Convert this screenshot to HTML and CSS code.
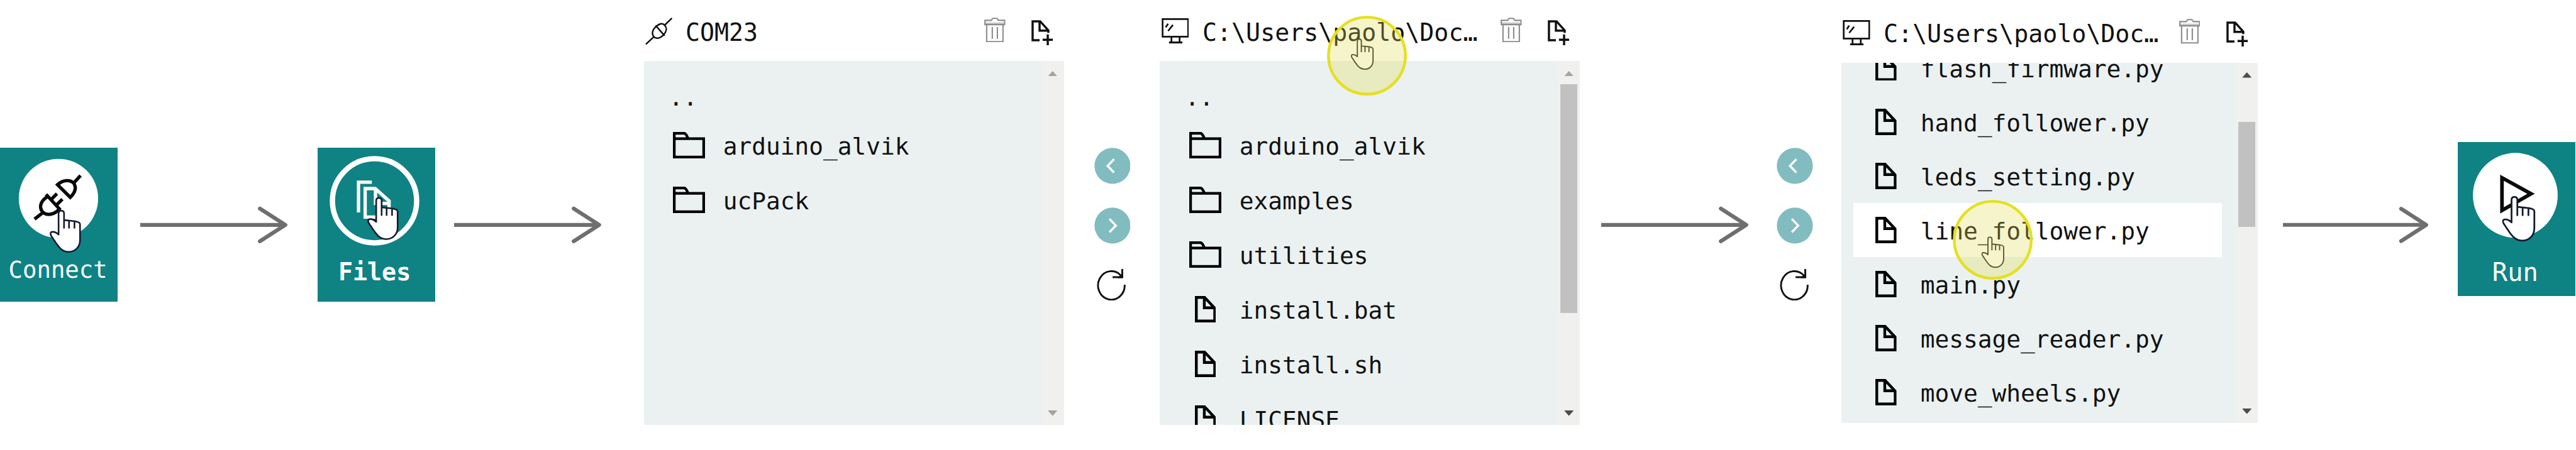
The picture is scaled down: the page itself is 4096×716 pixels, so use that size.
FILE: index.html
```html
<!DOCTYPE html>
<html lang="en">
<head>
<meta charset="utf-8">
<title>Run a script</title>
<link rel="stylesheet" href="styles.css">
</head>
<body>
<svg class="defs" aria-hidden="true">
  <defs>
    <symbol id="hand" viewBox="0 0 52 71" overflow="visible">
      <path stroke-width="2.7" stroke-linejoin="round" d="M15.2 41V6Q15.2 1.6 19.7 1.6Q24.2 1.6 24.2 6V17L42 19Q50.6 20.5 50.6 24V50C50.6 62 42 69.5 32 69.5C21 69.5 16 62 11 55L3 43Q0 37 5 36.5Q10 36 15.2 41ZM24.2 17V31M32.4 18V31M41.4 19V31"/>
    </symbol>
    <symbol id="folder" viewBox="0 0 53 43.5">
      <path fill="none" stroke="#000" stroke-width="4.4" d="M2.2 11V2.2H19Q22 3 25 11M2.2 11H50.8V41.3H2.2Z"/>
    </symbol>
    <symbol id="file" viewBox="0 0 35 43.5">
      <path fill="none" stroke="#000" stroke-width="4.6" d="M2.3 2.3H16L32.7 20V41.2H2.3ZM15.5 2V19.5H33"/>
    </symbol>
    <symbol id="trash" viewBox="0 0 35 41">
      <path fill="#c8c8c8" d="M1 8H34V12H1Z"/>
      <path fill="none" stroke="#8c8c8c" stroke-width="2.2" d="M1.2 4.5H11.5L14 1.3H21L23.5 4.5H33.8V11.5H1.2ZM4 12V39.8H31V12M13.3 15.5V35M21.7 15.5V35"/>
    </symbol>
    <symbol id="newfile" viewBox="0 0 35.5 42">
      <path fill="none" stroke="#111" stroke-width="3.6" d="M13.5 33.2H2V2H14.5L28 17V21M13.5 2V17.3H28M27 23.5V41.5M18.5 32.5H35.5"/>
    </symbol>
    <symbol id="monitor" viewBox="0 0 45 42">
      <path fill="none" stroke="#111" stroke-width="2.8" d="M1.4 1.5H43.6V30.5H1.4ZM16 31V39M29.5 31V39M6.500 15L10.5 9M10.5 21L18.5 11"/>
      <path stroke="#111" stroke-width="3.4" d="M12 40H34"/>
    </symbol>
    <symbol id="plug" viewBox="0 0 45 45">
      <path fill="none" stroke="#111" stroke-width="2.6" d="M1 44L15 31M31 13.5L44 1M17 13L32 30M18.5 14.5C24 9 29 9 32 12.5C36.5 17 35 23 30.5 28C25 34.5 18 36 14 31.5C10 27 12 19 18.5 14.5Z"/>
    </symbol>
    <symbol id="reload" viewBox="0 0 48 52">
      <path fill="none" stroke="#111" stroke-width="3" d="M46 26A22 23.5 0 1 1 40 11M42 0V13.5H26"/>
      <path d="M43 6V15H34Z" fill="#111"/>
    </symbol>
    <symbol id="arrow" viewBox="0 0 243 62">
      <path fill="none" stroke="#6f6f6f" stroke-width="6.3" d="M0 31H238"/>
      <path fill="none" stroke="#6f6f6f" stroke-width="6.5" stroke-linecap="round" stroke-linejoin="round" d="M197.500 4L239.500 31L197.500 58"/>
    </symbol>
    <symbol id="tri" viewBox="0 0 16 9"><path fill="currentColor" d="M8 0L16 9H0Z"/></symbol>
  </defs>
</svg>

<main class="steps">
  <section class="card">
    <svg class="card-art" viewBox="0 244 194 180">
      <circle cx="96.5" cy="327.800" r="65.500" fill="#fff"/>
      <path fill="none" stroke="#0a0a0a" stroke-width="5.5" d="M95 305C104 297 116 296 122 303C127 311 123 319 116 326ZM121 303L133 290M76 321L98 345C91 354 78 357 71 351C64 343 66 333 78 325M83 331L94 320M92 340L103 329M71 351L57 362"/>
      <use href="#hand" class="hand" x="81.5" y="346.5" width="52" height="71"/>
    </svg>
    <div class="label label-connect">Connect</div>
  </section>

  <svg class="arrow arrow-1"><use href="#arrow"/></svg>

  <section class="card card-files">
    <svg class="card-art" viewBox="524 244 194 180">
      <circle cx="618" cy="331.7" r="69.5" fill="none" stroke="#fff" stroke-width="8.8"/>
      <path fill="none" stroke="#fff" stroke-width="5.5" d="M591.5 351V301H613.5M642 332V358.5H602.5V311.5H619L642 332V336H619.5V311.5"/>
      <use href="#hand" class="hand" x="605.5" y="325.5" width="52" height="71"/>
    </svg>
    <div class="label label-files">Files</div>
  </section>

  <svg class="arrow arrow-2"><use href="#arrow"/></svg>

  <section class="panel panel-board">
    <header class="bar">
      <svg class="i-plug"><use href="#plug"/></svg>
      <span class="path">COM23</span>
      <svg class="i-trash"><use href="#trash"/></svg>
      <svg class="i-new"><use href="#newfile"/></svg>
    </header>
    <div class="list">
      <ul class="rows">
        <li class="up">..</li>
        <li><svg class="i-folder"><use href="#folder"/></svg>arduino_alvik</li>
        <li><svg class="i-folder"><use href="#folder"/></svg>ucPack</li>
      </ul>
      <div class="scroll off-up off-down">
        <svg class="tri"><use href="#tri"/></svg>
        <svg class="tri down"><use href="#tri"/></svg>
      </div>
    </div>
  </section>

  <nav class="moves">
    <svg class="round" viewBox="0 0 60 60"><circle cx="30" cy="30" r="29.7"/><path d="M32.5 19L22 30L32.5 41"/></svg>
    <svg class="round" viewBox="0 0 60 60"><circle cx="30" cy="30" r="29.7"/><path d="M25 19L35.5 30L25 41"/></svg>
    <svg class="reload"><use href="#reload"/></svg>
  </nav>

  <section class="panel panel-docs">
    <header class="bar">
      <svg class="i-monitor"><use href="#monitor"/></svg>
      <span class="path">C:\Users\paolo\Doc…</span>
      <svg class="i-trash"><use href="#trash"/></svg>
      <svg class="i-new"><use href="#newfile"/></svg>
    </header>
    <div class="list">
      <ul class="rows">
        <li class="up">..</li>
        <li><svg class="i-folder"><use href="#folder"/></svg>arduino_alvik</li>
        <li><svg class="i-folder"><use href="#folder"/></svg>examples</li>
        <li><svg class="i-folder"><use href="#folder"/></svg>utilities</li>
        <li><svg class="i-file"><use href="#file"/></svg>install.bat</li>
        <li><svg class="i-file"><use href="#file"/></svg>install.sh</li>
        <li><svg class="i-file"><use href="#file"/></svg>LICENSE</li>
      </ul>
      <div class="scroll off-up">
        <svg class="tri"><use href="#tri"/></svg>
        <div class="thumb"></div>
        <svg class="tri down"><use href="#tri"/></svg>
      </div>
    </div>
    <svg class="pointer" viewBox="0 0 132 132">
      <use href="#hand" class="hand soft" x="38" y="37.5" width="40" height="52"/>
      <circle cx="66" cy="66" r="63.5"/>
    </svg>
  </section>

  <svg class="arrow arrow-3"><use href="#arrow"/></svg>

  <nav class="moves moves-2">
    <svg class="round" viewBox="0 0 60 60"><circle cx="30" cy="30" r="29.7"/><path d="M32.5 19L22 30L32.5 41"/></svg>
    <svg class="round" viewBox="0 0 60 60"><circle cx="30" cy="30" r="29.7"/><path d="M25 19L35.5 30L25 41"/></svg>
    <svg class="reload"><use href="#reload"/></svg>
  </nav>

  <section class="panel panel-script">
    <header class="bar">
      <svg class="i-monitor"><use href="#monitor"/></svg>
      <span class="path">C:\Users\paolo\Doc…</span>
      <svg class="i-trash"><use href="#trash"/></svg>
      <svg class="i-new"><use href="#newfile"/></svg>
    </header>
    <div class="list">
      <ul class="rows">
        <li><svg class="i-file"><use href="#file"/></svg>flash_firmware.py</li>
        <li><svg class="i-file"><use href="#file"/></svg>hand_follower.py</li>
        <li><svg class="i-file"><use href="#file"/></svg>leds_setting.py</li>
        <li class="selected"><svg class="i-file"><use href="#file"/></svg>line_follower.py</li>
        <li><svg class="i-file"><use href="#file"/></svg>main.py</li>
        <li><svg class="i-file"><use href="#file"/></svg>message_reader.py</li>
        <li><svg class="i-file"><use href="#file"/></svg>move_wheels.py</li>
      </ul>
      <div class="scroll">
        <svg class="tri"><use href="#tri"/></svg>
        <div class="thumb"></div>
        <svg class="tri down"><use href="#tri"/></svg>
      </div>
    </div>
    <svg class="pointer" viewBox="0 0 132 132">
      <use href="#hand" class="hand soft" x="46" y="60.5" width="40" height="52"/>
      <circle cx="66" cy="66" r="63.5"/>
    </svg>
  </section>

  <svg class="arrow arrow-4"><use href="#arrow"/></svg>

  <section class="card card-run">
    <svg class="card-art" viewBox="4057 234 194 180">
      <circle cx="4152" cy="322" r="70" fill="#fff"/>
      <path fill="none" stroke="#0a0a0a" stroke-width="6" d="M4130 293V347L4178 319.5Z"/>
      <use href="#hand" class="hand" x="4129.5" y="323" width="55.5" height="75.5"/>
    </svg>
    <div class="label label-run">Run</div>
  </section>
</main>
</body>
</html>
```

FILE: styles.css
```css
/* 1rem = 100 design units */
html { font-size: 96.331px; }
* { box-sizing: border-box; }
body {
  margin: 0;
  height: 7.43rem;
  overflow: hidden;
  background: #fff;
  color: #111;
  font-family: "DejaVu Sans Mono", "Liberation Mono", monospace;
}
svg { display: block; flex: none; }
.defs { position: absolute; width: 0; height: 0; }

.steps { display: flex; align-items: flex-start; width: 42.52rem; height: 7.43rem; }
.steps > * { flex: none; }

/* teal step cards */
.card { width: 1.943rem; height: 2.55rem; margin-top: 2.438rem; background: #0f8284; }
.card-files { margin-left: .493rem; width: 1.94rem; }
.card-run { margin-left: .48rem; margin-top: 2.343rem; }
.card-art { width: 1.94rem; height: 1.8rem; overflow: visible; }
.label { color: #fff; text-align: center; line-height: .4rem; white-space: nowrap; }
.label-connect { font-size: .387rem; margin-top: .02rem; padding-right: .03rem; }
.label-files { font-size: .398rem; font-weight: bold; margin-top: .057rem; padding-right: .06rem; }
.label-run { font-size: .42rem; margin-top: .15rem; padding-right: .04rem; }

.hand { fill: #fff; stroke: #151a30; }
.soft { stroke: #222; }

.arrow { width: 2.43rem; height: .62rem; margin-top: 3.403rem; }
.arrow-1 { margin-left: .377rem; }
.arrow-2 { margin-left: .31rem; }
.arrow-3 { margin-left: .35rem; }
.arrow-4 { margin-left: .42rem; width: 2.4rem; }

/* file browser panels */
.panel { position: relative; font-size: .397rem; line-height: .4rem; }
.panel-board { width: 6.93rem; margin-left: .707rem; --left: .025rem; --gap: .21rem; --right: .18rem; }
.panel-docs { width: 6.94rem; margin-left: .48rem; --left: .03rem; --gap: .225rem; --right: .175rem; }
.panel-script { width: 6.87rem; margin-left: .465rem; margin-top: .025rem; --left: .02rem; --gap: .22rem; --right: .165rem; }
.bar {
  display: flex;
  align-items: center;
  height: 1.01rem;
  padding: .02rem var(--right) 0 var(--left);
}
.path { flex: 1; margin-left: var(--gap); white-space: pre; padding-top: .05rem; }
.i-plug { width: .45rem; height: .45rem; }
.i-monitor { width: .455rem; height: .42rem; }
.i-trash { width: .35rem; height: .41rem; margin: -.04rem .43rem 0 0; }
.i-new { width: .355rem; height: .42rem; margin-top: .05rem; }
.i-folder { width: .53rem; height: .435rem; }
.i-file { width: .35rem; height: .435rem; }

.list { display: flex; height: 6.007rem; background: #ebf1f1; overflow: hidden; font-size: .3925rem; }
.rows { flex: 1; margin: 0; padding: .037rem .22rem 0 .2rem; list-style: none; }
.rows li { display: flex; align-items: center; height: .903rem; padding: .05rem 0 0 .275rem; white-space: pre; }
.rows .i-folder { margin: -.05rem .3rem 0 0; }
.rows .i-file { margin: -.05rem .39rem 0 .09rem; }
.rows .up { padding-top: .22rem; padding-left: .21rem; }

.panel-docs .rows li { padding-left: .29rem; }
.panel-docs .rows .up { padding-left: .22rem; }

.panel-script .list { height: 5.952rem; }
.panel-script .rows { padding-top: 0; margin-top: -.365rem; }
.panel-script .rows li { height: .893rem; padding-left: .365rem; }
.panel-script .rows .i-file { margin-left: 0; }
.panel-script .rows .selected { background: #fff; }

.scroll {
  width: .365rem;
  padding: .16rem 0 .15rem;
  display: flex;
  flex-direction: column;
  align-items: center;
  background: #f0f0ef;
  color: #4c4c4c;
}
.off-up { color: #a3a3a3; }
.off-up:not(.off-down) .down { color: #4c4c4c; }
.tri { width: .16rem; height: .09rem; }
.down { transform: rotate(180deg); margin-top: auto; }
.thumb { width: .285rem; height: 3.78rem; margin-top: .13rem; background: #c1c1c1; }
.panel-script .thumb { height: 1.73rem; margin-top: .73rem; }

/* transfer buttons */
.moves { width: .6rem; margin: 2.437rem 0 0 .5rem; display: flex; flex-direction: column; align-items: center; }
.moves-2 { margin-left: .472rem; }
.round { width: .6rem; height: .6rem; margin-bottom: .39rem; }
.round circle { fill: #81bcc0; }
.round path { fill: none; stroke: #fff; stroke-width: 3.6; }
.reload { width: .48rem; height: .52rem; margin: .025rem .03rem 0 0; }

/* click highlight over the panel */
.pointer { position: absolute; width: 1.32rem; height: 1.32rem; }
.pointer circle { fill: rgba(225, 220, 80, .3); stroke: #e4e01f; stroke-width: 4.6; }
.panel-docs .pointer { left: 2.766rem; top: .255rem; }
.panel-script .pointer { left: 1.835rem; top: 3.278rem; }
```
